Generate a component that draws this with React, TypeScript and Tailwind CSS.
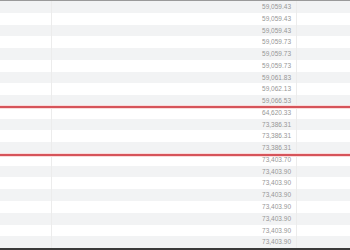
import React from 'react';

const values: string[] = [
  '59,059.43', '59,059.43', '59,059.43', '59,059.73', '59,059.73', '59,059.73',
  '59,061.83', '59,062.13', '59,066.53', '64,620.33', '73,386.31', '73,386.31',
  '73,386.31', '73,403.70', '73,403.90', '73,403.90', '73,403.90', '73,403.90',
  '73,403.90', '73,403.90', '73,403.90',
];

const App: React.FC = () => {
  return (
    <div className="relative w-[350px] h-[250px] overflow-hidden bg-white font-['Liberation_Sans',Arial,sans-serif]">
      <div className="flex flex-col h-full border-t border-[#9a9a9a] border-b-2 border-b-[#3a3a3a]">
        {values.map((v, i) => (
          <div key={i} className={`flex flex-1 ${i % 2 === 0 ? 'bg-[#f2f3f4]' : 'bg-white'}`}>
            <div className="w-[52px] border-r border-[#ececec]" />
            <div className="w-[245px] flex items-center justify-end pr-[5px] border-r border-[#ececec] text-[6.5px] text-[#969696]">
              {v}
            </div>
            <div className="flex-1" />
          </div>
        ))}
      </div>
      <div className="absolute left-0 right-0 top-[105px] h-[4px] bg-[#fadcdc] flex items-center">
        <div className="w-full h-[2px] bg-[#d6545a]" />
      </div>
      <div className="absolute left-0 right-0 top-[153px] h-[4px] bg-[#fadcdc] flex items-center">
        <div className="w-full h-[2px] bg-[#d6545a]" />
      </div>
    </div>
  );
};

export default App;
